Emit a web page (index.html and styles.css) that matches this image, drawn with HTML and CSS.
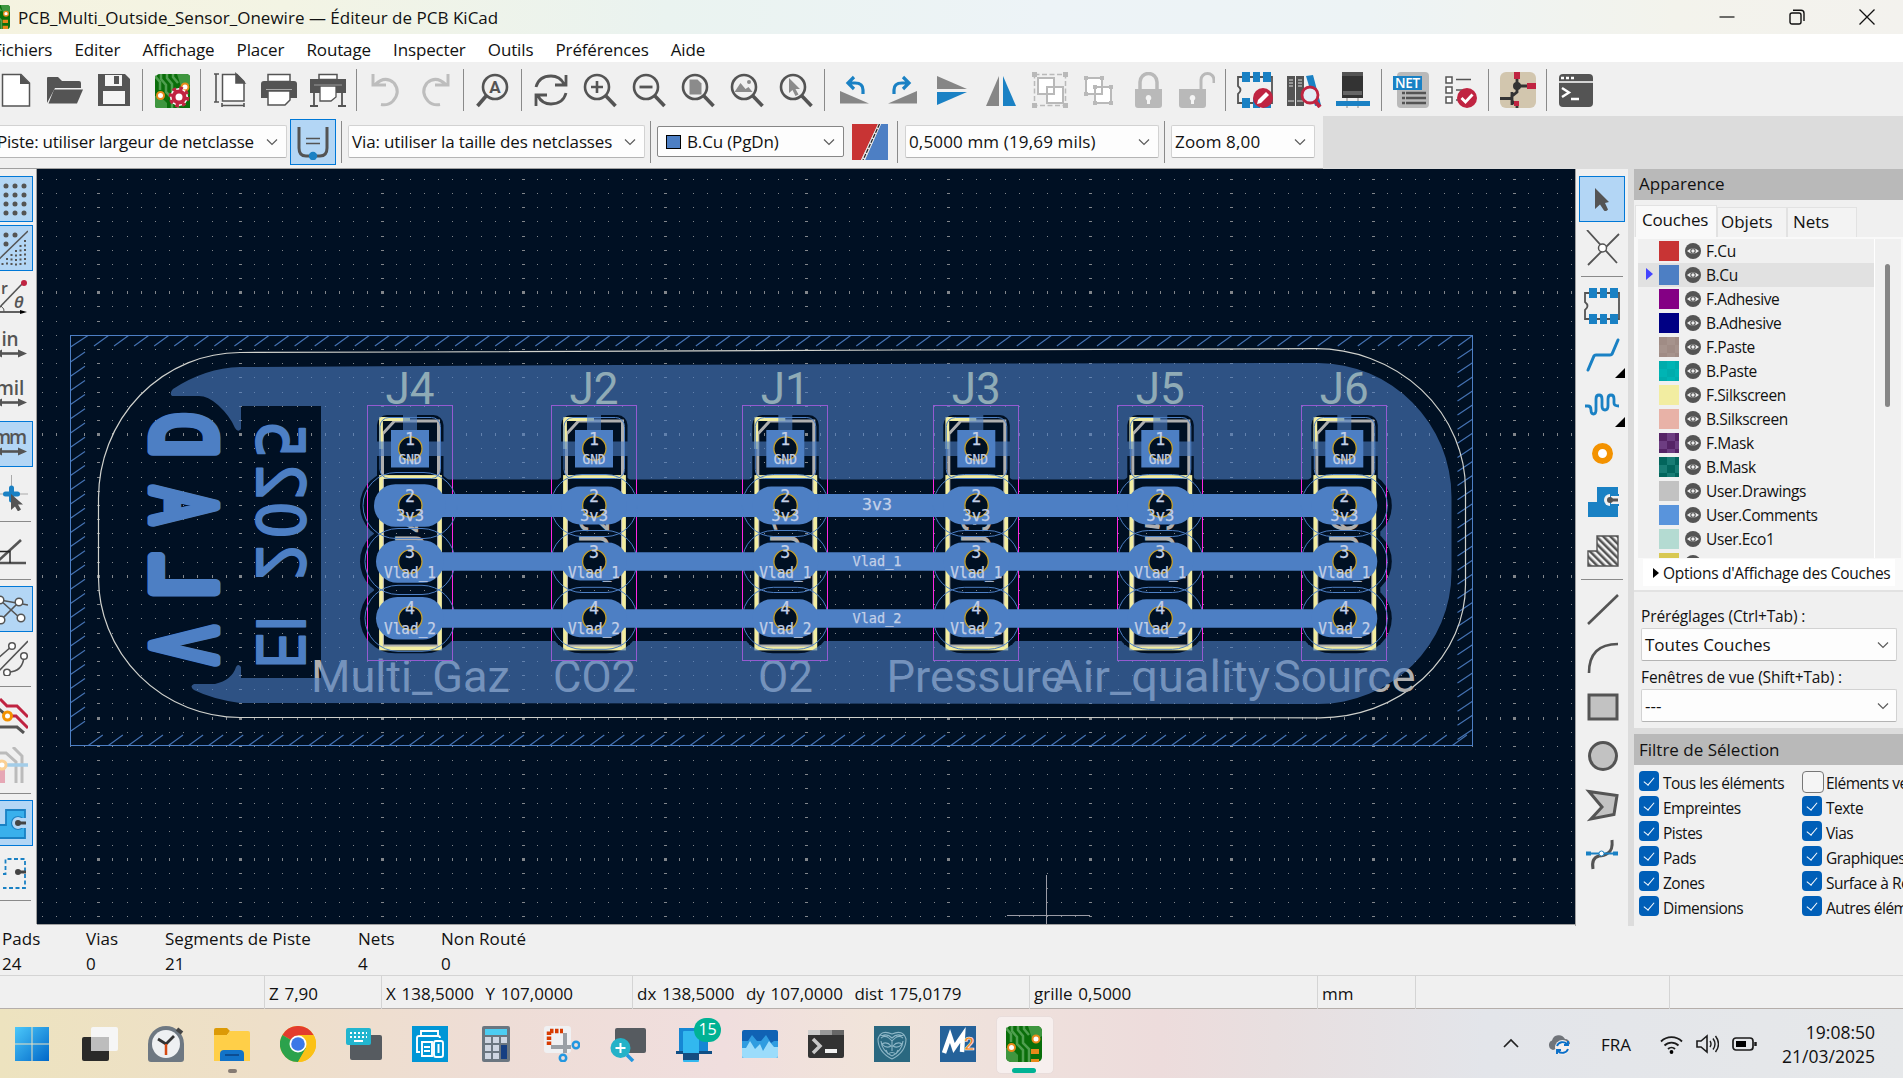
FILE: index.html
```html
<!DOCTYPE html>
<html lang="fr">
<head>
<meta charset="utf-8">
<title>PCB_Multi_Outside_Sensor_Onewire — Éditeur de PCB KiCad</title>
<link rel="stylesheet" href="styles.css">
</head>
<body>
<svg class="defs" width="0" height="0">
  <defs>
    <symbol id="eye" viewBox="0 0 16 16"><circle cx="8" cy="8" r="8" fill="#545454"/><path d="M2 8Q8 2.500 14 8Q8 13.500 2 8z" fill="#f0f0f0"/><circle cx="8" cy="8" r="2.200" fill="none" stroke="#545454" stroke-width="1.100"/></symbol>
    <symbol id="chev" viewBox="0 0 12 8"><path d="M1 1.500l5 5 5-5" fill="none" stroke="#5c5c5c" stroke-width="1.200"/></symbol>
    <symbol id="lens" viewBox="0 0 36 36"><circle cx="15" cy="15" r="12" fill="none" stroke="#545454" stroke-width="2.600"/><path d="M23.500 23.500L33.500 34" stroke="#545454" stroke-width="3.600"/></symbol>
    <symbol id="board" viewBox="0 0 36 36"><rect width="36" height="36" rx="5" fill="#0a6e0a"/><path d="M6 0v5l5 6v7l6 6v12M12 0v4l5 6v7l6 6v13M18 0v3l5 6" fill="none" stroke="#4f9e4f" stroke-width="2.500"/><path d="M22 0h9a5 5 0 0 1 5 5v5l-9 6zM0 22h5l7 7v7H5a5 5 0 0 1-5-5z" fill="#3f963f"/><path d="M0 2l5 6v8" fill="none" stroke="#4f9e4f" stroke-width="2.500"/><circle cx="30" cy="13" r="3.500" fill="#fff" stroke="#e8891a" stroke-width="2"/><circle cx="5.500" cy="21.500" r="3.500" fill="#fff" stroke="#e8891a" stroke-width="2"/></symbol>
    <symbol id="fp" viewBox="0 0 36 36"><path d="M1 5H35V31H1V22q5-4 0-8z" fill="none" stroke="#545454" stroke-width="1.800"/><path d="M5 0h8v10H5zM16 0h7v10h-7zM26 0h8v10h-8zM5 26h8v10H5zM16 26h7v10h-7zM26 26h8v10h-8z" fill="#1a81c4"/></symbol>
  </defs>
</svg>

<header class="titlebar">
  <svg class="appicon" viewBox="0 0 36 36"><use href="#board"/><path d="M25 22h8v5h-8zM25 31h8v5h-8z" fill="#e8891a"/></svg>
  <span class="title">PCB_Multi_Outside_Sensor_Onewire — Éditeur de PCB KiCad</span>
  <div class="wbtns">
    <svg viewBox="0 0 16 16"><path d="M.5 8h15" stroke="#111" stroke-width="1.200"/></svg>
    <svg viewBox="0 0 16 16"><rect x="1" y="4" width="11" height="11" rx="2" fill="none" stroke="#111" stroke-width="1.400"/><path d="M4 1.200h8a3 3 0 0 1 3 3V12" fill="none" stroke="#111" stroke-width="1.400"/></svg>
    <svg viewBox="0 0 16 16"><path d="M.5.500l15 15M15.500.500l-15 15" stroke="#111" stroke-width="1.300"/></svg>
  </div>
</header>

<nav class="menu"><span>Fichiers</span><span>Editer</span><span>Affichage</span><span>Placer</span><span>Routage</span><span>Inspecter</span><span>Outils</span><span>Préférences</span><span>Aide</span></nav>

<div class="toolbar">
  <i class="tb"><svg viewBox="0 0 36 36"><path d="M4.500 2.500H23L31.500 11V34H4.500z" fill="#fff" stroke="#545454" stroke-width="1.500"/><path d="M22 2l10 10H22z" fill="#545454"/></svg></i>
  <i class="tb"><svg viewBox="0 0 36 36"><path d="M0 31V6q0-1 1-1h10l4 4h17q2 0 2 2v5H8z" fill="#545454"/><path d="M7 17.500H36L30 31.500H1.500z" fill="#545454"/></svg></i>
  <i class="tb"><svg viewBox="0 0 36 36"><path d="M2 2h27l5 5v27H2z" fill="#545454"/><path d="M9 3h17v11H9zM7 19h22v13H7z" fill="#f4f4f4"/><path d="M18 4h5v8h-5z" fill="#545454"/></svg></i>
  <b class="sep"></b>
  <i class="tb"><svg viewBox="0 0 36 36"><svg x="1" y="2" width="34" height="33"><use href="#board"/></svg><circle cx="25" cy="25" r="9" fill="#fff"/><circle cx="25" cy="25" r="5.500" fill="#fff" stroke="#c02441" stroke-width="4"/><circle cx="25" cy="25" r="8.700" fill="none" stroke="#c02441" stroke-width="3.400" stroke-dasharray="3.600 3.230"/></svg></i>
  <b class="sep"></b>
  <i class="tb"><svg viewBox="0 0 36 36"><path d="M10.500 2.500H25L32 9.500V29H10.500z" fill="#fff" stroke="#545454" stroke-width="1.500"/><path d="M24 2l8.500 9H24zM4 2v28M2 2h5M2 30h5M10 33.500h22M10 31v4M32 31v4" fill="#545454" stroke="#545454" stroke-width="1.600"/></svg></i>
  <i class="tb"><svg viewBox="0 0 36 36"><path d="M7 2.500h22v7H7z" fill="#fff" stroke="#545454" stroke-width="1.500"/><path d="M3 9h30q3 0 3 3v14H0V12q0-3 3-3z" fill="#545454"/><path d="M7 19h22v9l-5 5H7z" fill="#fff" stroke="#545454" stroke-width="1.500"/><path d="M5 17.500h26" stroke="#aaa"/></svg></i>
  <i class="tb"><svg viewBox="0 0 36 36"><path d="M9 2.500h18v5H9z" fill="#fff" stroke="#545454" stroke-width="1.500"/><path d="M0 7h36v14H0z" fill="#545454"/><path d="M10 14h16v11l-5 4H10z" fill="#fff" stroke="#545454" stroke-width="1.300"/><path d="M4 20v14M32 20v14M0 34h8M28 34h8" stroke="#545454" stroke-width="1.800"/><path d="M4 13h28" stroke="#999"/></svg></i>
  <b class="sep"></b>
  <i class="tb"><svg viewBox="0 0 36 36"><path d="M5 2v11h13M7 12.500Q17 3 26 11q7 9-1 18-5 5-12 3.500" fill="none" stroke="#bdbdbd" stroke-width="3"/></svg></i>
  <i class="tb"><svg viewBox="0 0 36 36"><path d="M31 2v11H18M29 12.500Q19 3 10 11q-7 9 1 18 5 5 12 3.500" fill="none" stroke="#bdbdbd" stroke-width="3"/></svg></i>
  <b class="sep"></b>
  <i class="tb"><svg viewBox="0 0 36 36"><circle cx="20" cy="15" r="12" fill="none" stroke="#545454" stroke-width="2.600"/><path d="M11.500 23.500L2.500 34" stroke="#545454" stroke-width="3.600"/><text x="20" y="21" text-anchor="middle" font-size="17" font-weight="700" font-family="Roboto" fill="#545454">A</text></svg></i>
  <b class="sep"></b>
  <i class="tb"><svg viewBox="0 0 36 36"><path d="M3 15Q6 4 18 4q9 0 13 8M33 3v10H22M33 21q-3 11-15 11-9 0-13-8M3 34V23h11" fill="none" stroke="#545454" stroke-width="2.800"/></svg></i>
  <i class="tb"><svg viewBox="0 0 36 36"><use href="#lens"/><path d="M15 9v12M9 15h12" stroke="#545454" stroke-width="2.600"/></svg></i>
  <i class="tb"><svg viewBox="0 0 36 36"><use href="#lens"/><path d="M8.500 15h13" stroke="#545454" stroke-width="2.800"/></svg></i>
  <i class="tb"><svg viewBox="0 0 36 36"><use href="#lens"/><path d="M9.500 7.500h8l4 4v11h-12z" fill="#8b8b8b"/></svg></i>
  <i class="tb"><svg viewBox="0 0 36 36"><use href="#lens"/><path d="M5.500 20l6-9 5 6 3-2 4 5z" fill="#8b8b8b"/><circle cx="20" cy="10" r="2" fill="#8b8b8b"/></svg></i>
  <i class="tb"><svg viewBox="0 0 36 36"><use href="#lens"/><path d="M11 6v15l3.500-3 3 6 3-1.500-3-5.500h4.500z" fill="#8b8b8b"/></svg></i>
  <b class="sep"></b>
  <i class="tb"><svg viewBox="0 0 36 36"><path d="M4 19v12.500H33z" fill="#868686"/><path d="M27 22V18q0-7-8-7h-5M18 5l-6 6 6 6" fill="none" stroke="#1a81c4" stroke-width="3.200"/></svg></i>
  <i class="tb"><svg viewBox="0 0 36 36"><path d="M32 19v12.500H3z" fill="#868686"/><path d="M9 22V18q0-7 8-7h5M18 5l6 6-6 6" fill="none" stroke="#1a81c4" stroke-width="3.200"/></svg></i>
  <i class="tb"><svg viewBox="0 0 36 36"><path d="M3 4v13h30z" fill="#868686"/><path d="M3 33V20h30z" fill="#1a81c4"/></svg></i>
  <i class="tb"><svg viewBox="0 0 36 36"><path d="M16 4v30H3z" fill="#868686"/><path d="M20 4v30h13z" fill="#1a81c4"/></svg></i>
  <i class="tb"><svg viewBox="0 0 36 36"><path d="M2.500 2.500h31v31h-31z" fill="none" stroke="#b9b9b9" stroke-width="1.500" stroke-dasharray="5 2.500"/><path d="M0 0h5v5H0zM31 0h5v5h-5zM0 31h5v5H0zM31 31h5v5h-5z" fill="#b9b9b9"/><path d="M6 6h16v16H6zM15 15h16v16H15z" fill="#fff" stroke="#b9b9b9" stroke-width="2"/></svg></i>
  <i class="tb"><svg viewBox="0 0 36 36"><path d="M5 6h16v16H5zM14 15h16v16H14z" fill="#fff" stroke="#b9b9b9" stroke-width="2"/><path d="M3 4h4v4H3zM19 4h4v4h-4zM3 20h4v4H3zM12 13h4v4h-4zM28 13h4v4h-4zM12 29h4v4h-4zM28 29h4v4h-4z" fill="#b9b9b9"/></svg></i>
  <i class="tb"><svg viewBox="0 0 36 36"><path d="M5 17h27v16q0 3-3 3H8q-3 0-3-3z" fill="#b9b9b9"/><path d="M10 18V10a8.500 8.500 0 0 1 17 0v8" fill="none" stroke="#b9b9b9" stroke-width="3.500"/><path d="M18.500 23a3 3 0 0 1 1.500 5.500V32h-3v-3.500A3 3 0 0 1 18.500 23z" fill="#f4f4f4"/></svg></i>
  <i class="tb"><svg viewBox="0 0 36 36"><path d="M0 17h27v16q0 3-3 3H3q-3 0-3-3z" fill="#b9b9b9"/><path d="M22 18V8a6.500 6.500 0 0 1 13 0v3" fill="none" stroke="#b9b9b9" stroke-width="3"/><path d="M13.500 23a3 3 0 0 1 1.500 5.500V32h-3v-3.500A3 3 0 0 1 13.500 23z" fill="#f4f4f4"/></svg></i>
  <b class="sep"></b>
  <i class="tb"><svg viewBox="0 0 36 36"><use href="#fp"/><circle cx="26" cy="26" r="10" fill="#c02441"/><path d="M20 32l1-4 8-8 3 3-8 8z" fill="#fff"/></svg></i>
  <i class="tb"><svg viewBox="0 0 36 36"><path d="M1 4h8v30H1zM10 4h8v30h-8z" fill="#545454"/><path d="M20 4l7-1 8 30-6 1z" fill="#1a81c4"/><path d="M3 8h4M3 11h4M3 14h4M12 8h4M12 11h4M12 14h4M2 29h6M11 29h6" stroke="#ddd"/><circle cx="24" cy="23" r="8" fill="#e3edf6" stroke="#c02441" stroke-width="2.800"/><path d="M29 29l5 6" stroke="#c02441" stroke-width="4"/></svg></i>
  <i class="tb"><svg viewBox="0 0 36 36"><path d="M7 0h21v26H7z" fill="#333"/><path d="M7 0h21v4H7z" fill="#545454"/><path d="M8 19h19v4H8z" fill="#666"/><path d="M1 29h34v5H1z" fill="#1a81c4"/><path d="M12 26v3M23 26v3M12 34v2M23 34v2" stroke="#aaa" stroke-width="1.500"/></svg></i>
  <b class="sep"></b>
  <i class="tb"><svg viewBox="0 0 36 36"><rect x="4" width="32" height="36" rx="4" fill="#b9b9b9"/><path d="M0 4h29v14H0z" fill="#1a81c4"/><text x="14.500" y="16" text-anchor="middle" font-size="13.500" font-weight="600" font-family="Open Sans" textLength="25" fill="#fff">NET</text><path d="M13 21h20M13 26h20M13 31h20" stroke="#545454" stroke-width="2.600"/><path d="M9 21h3M9 26h3M9 31h3" stroke="#545454" stroke-width="2.600"/></svg></i>
  <i class="tb"><svg viewBox="0 0 36 36"><path d="M4 5h6v6H4zM4 15h6v6H4zM4 25h6v6H4z" fill="#fff" stroke="#545454" stroke-width="1.500"/><path d="M14 7.500h15M14 18h8M14 28h4" stroke="#545454" stroke-width="1.600"/><circle cx="25" cy="26" r="10" fill="#c02441"/><path d="M19.500 26l4 4 7-7.500" fill="none" stroke="#fff" stroke-width="2.800"/></svg></i>
  <b class="sep"></b>
  <i class="tb"><svg viewBox="0 0 36 36"><rect width="36" height="36" rx="6" fill="#d2c6ae"/><path d="M17 0v20l-6 5M17 14h14M0 26.500h12M12 20v13M12 29l5 4v3" fill="none" stroke="#333" stroke-width="2.800"/><circle cx="17" cy="14" r="4" fill="#333"/><path d="M14 0h6v7h-6zM27 11h9v6h-9zM14 29h5v5h-5z" fill="#c02441"/></svg></i>
  <b class="sep"></b>
  <i class="tb"><svg viewBox="0 0 36 36"><rect x="1" y="2" width="34" height="33" rx="4" fill="#545454"/><path d="M1 10h34" stroke="#fff" stroke-width="1.400"/><path d="M3 6h3M8 6h3M13 6h3" stroke="#fff" stroke-width="2.400"/><path d="M4 16l7 4.500L4 25M13 27h8" fill="none" stroke="#fff" stroke-width="2.400"/></svg></i>
</div>

<div class="options">
  <div class="combo c1"><span>Piste: utiliser largeur de netclasse</span><svg><use href="#chev"/></svg></div>
  <div class="toggle"><svg viewBox="0 0 36 36"><path d="M4 3v21q0 8 7 8h14q7 0 7-8V3" fill="none" stroke="#545454" stroke-width="3"/><path d="M11 14.500h14M11 19.500h14" stroke="#545454" stroke-width="1.500"/><circle cx="18" cy="32" r="4.200" fill="#1a81c4"/></svg></div>
  <b class="sep"></b>
  <div class="combo c2"><span>Via: utiliser la taille des netclasses</span><svg><use href="#chev"/></svg></div>
  <b class="sep"></b>
  <div class="combo c3"><i></i><span>B.Cu (PgDn)</span><svg><use href="#chev"/></svg></div>
  <svg class="pair" viewBox="0 0 36 36"><path d="M0 0h26L9 36H0z" fill="#c83434"/><path d="M29 0h7v36H13z" fill="#4d7fc4"/><path d="M26 0h3L13 36H9z" fill="#e4e4e4"/><path d="M27.500 0L11 36" stroke="#222" stroke-width="1.200" stroke-dasharray="4 1.500"/></svg>
  <b class="sep"></b>
  <div class="combo c4"><span>0,5000 mm (19,69 mils)</span><svg><use href="#chev"/></svg></div>
  <b class="sep"></b>
  <div class="combo c5"><span>Zoom 8,00</span><svg><use href="#chev"/></svg></div>
</div>

<main class="work">
  <aside class="left">
    <i class="vb on"><svg viewBox="0 0 36 36"><path d="M5 5h0M14 5h0M23 5h0M32 5h0M5 14h0M14 14h0M23 14h0M32 14h0M5 23h0M14 23h0M23 23h0M32 23h0M5 32h0M14 32h0M23 32h0M32 32h0" stroke="#545454" stroke-width="5" stroke-linecap="round"/></svg></i>
    <i class="vb on"><svg viewBox="0 0 36 36"><path d="M5 5h0M14 5h0M23 5h0M5 14h0M14 14h0" stroke="#545454" stroke-width="5" stroke-linecap="round"/><path d="M1 35L36 1" stroke="#545454" stroke-width="1.500"/><path d="M33 10v26M28.500 15v21M24 20v16M19.500 24v12M15 28v8M10.500 33v3" stroke="#545454" stroke-width="2" stroke-dasharray="2 2.500"/></svg></i>
    <i class="vb"><svg viewBox="0 0 36 36"><path d="M4 32L31 4" stroke="#545454" stroke-width="1.600"/><circle cx="32" cy="4" r="3" fill="#c02441"/><path d="M0 33h30" stroke="#222" stroke-width="1.400"/><path d="M28 31l7 2-7 2z"/><path d="M9 27q4 3 3 6" fill="none" stroke="#545454"/><text x="9" y="15" font-size="16" font-family="Open Sans" font-weight="600" fill="#545454">r</text><text x="22" y="29" font-size="17" font-family="Open Sans" font-style="italic" font-weight="600" fill="#545454">θ</text></svg></i>
    <i class="vb"><svg viewBox="0 0 36 36"><text x="18" y="18" text-anchor="middle" font-size="19" font-family="Open Sans" font-weight="600" fill="#545454">in</text><path d="M5 25.500h26" stroke="#545454" stroke-width="2.600"/><path d="M1 25.500l9-4v8zM35 25.500l-9-4v8z" fill="#545454"/></svg></i>
    <i class="vb"><svg viewBox="0 0 36 36"><text x="18" y="18" text-anchor="middle" font-size="19" font-family="Open Sans" font-weight="600" fill="#545454">mil</text><path d="M5 25.500h26" stroke="#545454" stroke-width="2.600"/><path d="M1 25.500l9-4v8zM35 25.500l-9-4v8z" fill="#545454"/></svg></i>
    <i class="vb on"><svg viewBox="0 0 36 36"><text x="18" y="18" text-anchor="middle" font-size="19" font-family="Open Sans" font-weight="600" textLength="34" fill="#545454">mm</text><path d="M5 25.500h26" stroke="#545454" stroke-width="2.600"/><path d="M1 25.500l9-4v8zM35 25.500l-9-4v8z" fill="#545454"/></svg></i>
    <i class="vb"><svg viewBox="0 0 36 36"><path d="M19.500 0v34M2 19h34" stroke="#aaa"/><path d="M19.500 13v12M13.500 19h12" stroke="#1a81c4" stroke-width="5" stroke-linecap="round"/><path d="M19 19v16l4-3.500 3 5 3-2-3-5h5z" fill="#545454"/></svg></i>
    <b class="hsep"></b>
    <i class="vb"><svg viewBox="0 0 36 36"><path d="M0 30h34" stroke="#545454" stroke-width="2.600"/><path d="M4 30L29 7" stroke="#545454" stroke-width="2.600"/><path d="M8 18.500h10V30" fill="none" stroke="#222" stroke-width="1.400"/></svg></i>
    <b class="hsep"></b>
    <i class="vb on"><svg viewBox="0 0 36 36"><path d="M8 9l20 18M8 30L27 11M8 9l28 5" stroke="#545454" stroke-width="1.600"/><g fill="#fff" stroke="#545454" stroke-width="1.500"><circle cx="8" cy="9" r="3.800"/><circle cx="27" cy="11" r="3.800"/><circle cx="29" cy="27" r="3.800"/><circle cx="9" cy="29" r="3.800"/></g></svg></i>
    <i class="vb"><svg viewBox="0 0 36 36"><path d="M2 36L36 1M4 20L20 6M16 32q15 0 16-16" fill="none" stroke="#545454" stroke-width="1.600"/><g fill="#fff" stroke="#545454" stroke-width="1.500"><circle cx="20" cy="6" r="3.300"/><circle cx="32" cy="16" r="3.300"/><circle cx="15" cy="32.500" r="3.300"/></g></svg></i>
    <b class="hsep"></b>
    <i class="vb"><svg viewBox="0 0 36 36"><path d="M8 1l7 7h10l11 11M18 18h6l12 12" fill="none" stroke="#c02441" stroke-width="3"/><path d="M7 11l8 7M8 29h17l7 6" fill="none" stroke="#545454" stroke-width="3"/><circle cx="15.500" cy="18" r="4" fill="#fff" stroke="#f39200" stroke-width="3"/></svg></i>
    <i class="vb"><svg viewBox="0 0 36 36"><path d="M7 6h7l10 9v21M21 0l9 9v27" fill="none" stroke="#bbb" stroke-width="3"/><path d="M10 18h26" stroke="#a3cde8" stroke-width="3.500"/><path d="M8 22h5v14H8z" fill="#e6a7b5"/><circle cx="10" cy="18" r="4" fill="#fff" stroke="#fbd094" stroke-width="3"/></svg></i>
    <b class="hsep"></b>
    <i class="vb on"><svg viewBox="0 0 36 36"><path d="M4 20h10V5h19v28H4z" fill="#39b0ec" stroke="#1a81c4" stroke-width="1.800"/><circle cx="26" cy="18" r="6.500" fill="#b3d6f5" stroke="#1a81c4" stroke-width="1.200"/><path d="M27 13h8v10h-8z" fill="#b3d6f5"/><circle cx="26" cy="18" r="3" fill="#444"/><path d="M26 18h8" stroke="#444" stroke-width="3"/></svg></i>
    <i class="vb"><svg viewBox="0 0 36 36"><path d="M11 20h2.500V5H33v29H11" fill="none" stroke="#1a81c4" stroke-width="1.800" stroke-dasharray="4 2.500"/><circle cx="26" cy="18" r="3" fill="#444"/><path d="M26 18h8" stroke="#444" stroke-width="3"/></svg></i>
    <b class="hsep"></b>
  </aside>

  <svg class="canvas" id="pcb" viewBox="37 169 1538 755" width="1538" height="755"></svg>

  <aside class="right">
    <i class="vb on"><svg viewBox="0 0 36 36"><path d="M11 7v21l5-4.500 4 6q2 1.500 4-1l-3-6.500 4-1z" fill="#545454"/></svg></i>
    <i class="vb"><svg viewBox="0 0 36 36"><path d="M3 0l30 33M35 4L4 35" stroke="#545454" stroke-width="1.800"/><circle cx="18.500" cy="18" r="4" fill="#fff" stroke="#545454" stroke-width="1.500"/></svg></i>
    <b class="hsep"></b>
    <i class="vb"><svg viewBox="0 0 36 36"><use href="#fp"/></svg></i>
    <i class="vb m"><svg viewBox="0 0 36 36"><path d="M4 33l6-14q.500-1 2-1h14q1.500 0 2-1l6-14" fill="none" stroke="#1a81c4" stroke-width="3" stroke-linecap="round"/></svg></i>
    <i class="vb m"><svg viewBox="0 0 36 36"><path d="M1 20h3q3 0 3 4t2.500 4 2.500-4V13q0-4 3-4t3 4v7q0 4 3 4t3-4v-7q0-4 3-4t3 4v4q0 3 5 3" fill="none" stroke="#1a81c4" stroke-width="2.800"/></svg></i>
    <i class="vb"><svg viewBox="0 0 36 36"><circle cx="18.500" cy="18.500" r="7.500" fill="#fff" stroke="#f39200" stroke-width="6"/></svg></i>
    <i class="vb"><svg viewBox="0 0 36 36"><path d="M4 18h9V3h21v30H4z" fill="#1a81c4"/><circle cx="26" cy="16" r="6" fill="#f0f0f0"/><path d="M26 10h9v12h-9z" fill="#1a81c4"/><path d="M27 12h8v8h-8z" fill="#f0f0f0"/><circle cx="26" cy="16" r="3" fill="#545454"/><path d="M26 16h8" stroke="#545454" stroke-width="3"/></svg></i>
    <i class="vb"><svg viewBox="0 0 36 36"><defs><pattern id="hx" width="5" height="5" patternUnits="userSpaceOnUse" patternTransform="rotate(-45)"><path d="M0 0v5" stroke="#545454" stroke-width="5"/></pattern></defs><path d="M4 18h9V3h21v30H4z" fill="url(#hx)" stroke="#545454" stroke-width="1.400"/></svg></i>
    <b class="hsep"></b>
    <i class="vb"><svg viewBox="0 0 36 36"><path d="M4 33L34 4" stroke="#545454" stroke-width="2.600"/></svg></i>
    <i class="vb"><svg viewBox="0 0 36 36"><path d="M5 33Q5 4 34 4" fill="none" stroke="#545454" stroke-width="2.600"/></svg></i>
    <i class="vb"><svg viewBox="0 0 36 36"><path d="M5 6h28v24H5z" fill="#c2c2c2" stroke="#545454" stroke-width="3"/></svg></i>
    <i class="vb"><svg viewBox="0 0 36 36"><circle cx="19" cy="18" r="13.500" fill="#c2c2c2" stroke="#545454" stroke-width="3"/></svg></i>
    <i class="vb"><svg viewBox="0 0 36 36"><path d="M5 4.500l28 4-3 19L7 32l11-12z" fill="#c2c2c2" stroke="#545454" stroke-width="3"/></svg></i>
    <i class="vb"><svg viewBox="0 0 36 36"><path d="M28 4q1 10-4 13-4 3-9 3-8 2-6 13" fill="none" stroke="#545454" stroke-width="3"/><path d="M4 17.500h30" stroke="#1a81c4" stroke-width="2"/><path d="M2 15.500h5v4H2zM29 15.500h5v4h-5z" fill="#1a81c4"/><circle cx="17.500" cy="17.500" r="2.500" fill="#fff" stroke="#1a81c4"/></svg></i>
  </aside>

  <section class="panel">
    <h2 class="phead">Apparence</h2>
    <div class="tabs"><span class="tab cur">Couches</span><span class="tab t2">Objets</span><span class="tab t3">Nets</span></div>
    <div class="book">
      <div class="listrow">
        <ul class="layers">
          <li><i class="s-fcu"></i><svg><use href="#eye"/></svg>F.Cu</li>
          <li class="sel"><i class="s-bcu"></i><svg><use href="#eye"/></svg>B.Cu</li>
          <li><i class="s-fad"></i><svg><use href="#eye"/></svg>F.Adhesive</li>
          <li><i class="s-bad"></i><svg><use href="#eye"/></svg>B.Adhesive</li>
          <li><i class="s-fpa"></i><svg><use href="#eye"/></svg>F.Paste</li>
          <li><i class="s-bpa"></i><svg><use href="#eye"/></svg>B.Paste</li>
          <li><i class="s-fsi"></i><svg><use href="#eye"/></svg>F.Silkscreen</li>
          <li><i class="s-bsi"></i><svg><use href="#eye"/></svg>B.Silkscreen</li>
          <li><i class="s-fma"></i><svg><use href="#eye"/></svg>F.Mask</li>
          <li><i class="s-bma"></i><svg><use href="#eye"/></svg>B.Mask</li>
          <li><i class="s-udr"></i><svg><use href="#eye"/></svg>User.Drawings</li>
          <li><i class="s-uco"></i><svg><use href="#eye"/></svg>User.Comments</li>
          <li><i class="s-ue1"></i><svg><use href="#eye"/></svg>User.Eco1</li>
          <li><i class="s-ue2"></i><svg><use href="#eye"/></svg></li>
        </ul>
        <div class="scroll"><b></b></div>
      </div>
      <div class="opts"><i></i><span>Options d'Affichage des Couches</span></div>
    </div>
    <label class="lbl">Préréglages (Ctrl+Tab) :</label>
    <div class="combo pc"><span>Toutes Couches</span><svg><use href="#chev"/></svg></div>
    <label class="lbl l2">Fenêtres de vue (Shift+Tab) :</label>
    <div class="combo pc"><span>---</span><svg><use href="#chev"/></svg></div>
    <h2 class="phead second">Filtre de Sélection</h2>
    <div class="checks">
      <span class="ck">Tous les éléments</span><span class="ck off">Eléments verrouillés</span>
      <span class="ck">Empreintes</span><span class="ck">Texte</span>
      <span class="ck">Pistes</span><span class="ck">Vias</span>
      <span class="ck">Pads</span><span class="ck">Graphiques</span>
      <span class="ck">Zones</span><span class="ck">Surface à Règles</span>
      <span class="ck">Dimensions</span><span class="ck">Autres éléments</span>
    </div>
  </section>
</main>

<div class="msg">
  <div>Pads<br>24</div><div>Vias<br>0</div><div>Segments de Piste<br>21</div><div>Nets<br>4</div><div>Non Routé<br>0</div>
</div>
<div class="status"><span></span><span>Z 7,90</span><span>X 138,5000&nbsp; Y 107,0000</span><span>dx 138,5000&nbsp; dy 107,0000&nbsp; dist 175,0179</span><span>grille 0,5000</span><span>mm</span><span></span><span></span></div>

<footer class="taskbar">
  <div class="apps">
    <i><svg viewBox="0 0 36 36"><defs><linearGradient id="wg" x2="1" y2="1"><stop offset="0" stop-color="#4cc8fa"/><stop offset="1" stop-color="#0067c8"/></linearGradient></defs><path d="M1 1h16.500v16.500H1zM18.500 1H35v16.500H18.500zM1 18.500h16.500V35H1zM18.500 18.500H35V35H18.500z" fill="url(#wg)"/></svg></i>
    <i><svg viewBox="0 0 36 36"><rect y="11" width="27" height="24" rx="2" fill="#2a2a29"/><rect x="9" y="1" width="27" height="24" rx="2" fill="#f6f6f6"/><path d="M9 11h18v14H9z" fill="#bdbdbd"/></svg></i>
    <i><svg viewBox="0 0 36 36"><path d="M0 18a18 18 0 0 1 36 0v15q0 3-3 3H3q-3 0-3-3z" fill="#6e7882"/><path d="M29 3l5 4" stroke="#444" stroke-width="4"/><circle cx="18" cy="18" r="14" fill="#eef0f2"/><path d="M18 18l8-8M18 18l-8-5" stroke="#333" stroke-width="2.800"/><path d="M18 18v11" stroke="#d64a13" stroke-width="2.500"/></svg></i>
    <i class="run"><svg viewBox="0 0 36 36"><path d="M0 4q0-2 2-2h11l3 3-3 4H0z" fill="#dc9a06"/><path d="M0 9h13l3-4h18q2 0 2 2v28H0z" fill="#ffcf48"/><path d="M6 35v-7q0-4 4-4h16q4 0 4 4v7z" fill="#1273c8"/><path d="M11 29h14" stroke="#0c4d92" stroke-width="2"/></svg></i>
    <i><svg viewBox="0 0 36 36"><circle cx="18" cy="18" r="18" fill="#fbc116"/><path d="M18 18L2.400 9A18 18 0 0 1 33.600 9z" fill="#e33b2e"/><path d="M2.400 9a18 18 0 0 0 15.600 27l8-14-8-4z" fill="#2ba24c"/><path d="M18 9h15.600A18 18 0 0 1 18 36l8-14z" fill="#fbc116"/><circle cx="18" cy="18" r="8.500" fill="#fff"/><circle cx="18" cy="18" r="6.800" fill="#3b78e7"/></svg></i>
    <i><svg viewBox="0 0 36 36"><rect x="4" y="9" width="32" height="25" rx="2" fill="#565b60"/><rect y="2" width="25" height="17" rx="2" fill="#22b5cf"/><path d="M4 7h17M4 11h17" stroke="#fff" stroke-width="2" stroke-dasharray="2 2"/><path d="M8 15h9" stroke="#fff" stroke-width="2"/></svg></i>
    <i><svg viewBox="0 0 36 36"><path d="M0 0h36v36H0z" fill="#0096d6"/><path d="M9 9V5h17v4M8 26H5V12q0-2 2-2h19q2 0 2 2M10 16h10v14H10zM12 21h6M12 25h6" fill="none" stroke="#fff" stroke-width="1.900"/><rect x="22" y="15" width="9" height="16" rx="2" fill="#0096d6" stroke="#fff" stroke-width="1.900"/><path d="M26.500 18v9" stroke="#fff" stroke-width="2"/></svg></i>
    <i><svg viewBox="0 0 36 36"><rect x="4" width="28" height="36" rx="2" fill="#6b7680"/><path d="M7 3h22v6H7z" fill="#4ccdf2"/><path d="M7 11h6v6H7zM15 11h6v6h-6zM23 11h6v6h-6zM7 19h6v6H7zM15 19h6v6h-6zM7 27h6v6H7zM15 27h6v6h-6z" fill="#cfd6e2"/><path d="M23 19h6v14h-6z" fill="#163f82"/></svg></i>
    <i><svg viewBox="0 0 36 36"><rect width="27" height="27" rx="3" fill="#f0f1f3"/><path d="M5 19V5h14" fill="none" stroke="#d83b01" stroke-width="4.500" stroke-dasharray="3.500 1.500"/><path d="M21 7v20M7 21h20" stroke="#9aa0a6" stroke-width="4"/><circle cx="32" cy="19" r="3.200" fill="none" stroke="#2397e0" stroke-width="2.500"/><circle cx="19" cy="32" r="3.200" fill="none" stroke="#2397e0" stroke-width="2.500"/></svg></i>
    <i><svg viewBox="0 0 36 36"><rect x="5" y="2" width="31" height="25" rx="2" fill="#565b60"/><circle cx="10.500" cy="22" r="10" fill="#24b2c8"/><path d="M10.500 17v10M5.500 22h10" stroke="#fff" stroke-width="2"/><path d="M17 29l6 6" stroke="#2397e0" stroke-width="3.500"/></svg></i>
    <i><svg viewBox="0 0 36 36"><path d="M3 2h29v24H3z" fill="#1687d4"/><path d="M0 25h36v3H0z" fill="#104f85"/><rect x="7" y="5" width="16" height="31" rx="1" fill="#32b8ef"/><path d="M7 27h16v7H7z" fill="#154d80"/></svg><em>15</em></i>
    <i><svg viewBox="0 0 36 36"><rect y="4" width="36" height="28" rx="2" fill="#1062b4"/><path d="M0 15h6l4-6 5 6 4 0 5-6 5 8 3-2h4v15q0 2-2 2H2q-2 0-2-2z" fill="#2f9ce0"/><path d="M0 22h4l4-7 5 8 5-5 3 7 6-10 5 6h4v9q0 2-2 2H2q-2 0-2-2z" fill="#9bdcfb"/></svg></i>
    <i><svg viewBox="0 0 36 36"><rect y="4" width="36" height="28" rx="2" fill="#333"/><path d="M0 4h12v5H0z" fill="#ccc"/><path d="M12 4h12v5H12z" fill="#999"/><path d="M24 4h12v5H24z" fill="#666"/><path d="M5 13l7 7-7 7" fill="none" stroke="#c8c8c8" stroke-width="3.500"/><path d="M17 25h12" stroke="#f2f2f2" stroke-width="4"/></svg></i>
    <i><svg viewBox="0 0 36 36"><path d="M0 0h36v36H0z" fill="#2a6880"/><path d="M18 33Q4 26 4 13q3-10 14-5 11-5 14 5 0 13-14 20zM18 30Q8 25 7 15M18 30q10-5 11-15M7 12q5-4 11 3 6-7 11-3M8 10q5-3 10 2 5-5 10-2M8 18q5-3 9 2-5 3-9-2zM28 18q-5-3-9 2 5 3 9-2zM14 28q4-3 8 0M18 15v10M6 9l8 2M30 9l-8 2M12 24l2 4M24 24l-2 4" fill="none" stroke="#8db6c6" stroke-width="1.100"/></svg></i>
    <i><svg viewBox="0 0 36 36"><path d="M0 0h36v36H0z" fill="#25629a"/><path d="M4 27L10 10l4 12 9-13-1 17" fill="none" stroke="#fff" stroke-width="4.500"/><text x="24" y="24" font-size="18" font-weight="700" font-family="Roboto" fill="#f58220" stroke="#fff" stroke-width=".6">2</text></svg></i>
    <i class="active"><svg viewBox="0 0 36 36"><use href="#board"/><path d="M25 23h8v5h-8zM25 33h8v3h-8z" fill="#e8891a"/></svg></i>
  </div>
  <div class="tray">
    <svg class="t-ch" viewBox="0 0 18 18"><path d="M2 12l7-7 7 7" fill="none" stroke="#222" stroke-width="1.700"/></svg>
    <svg class="t-cl" viewBox="0 0 24 24"><path d="M6 18a5 5 0 0 1-1-9.500A7 7 0 0 1 18 7a5 5 0 0 1 5 5" fill="#70747a"/><circle cx="15.500" cy="15.500" r="7.500" fill="#f3eeee"/><path d="M10 14a6 6 0 0 1 10-2M21 9v4h-4M21 17a6 6 0 0 1-10 2M10 22v-4h4" fill="none" stroke="#0a6fc8" stroke-width="1.900"/></svg>
    <span class="fra">FRA</span>
    <svg class="t-wi" viewBox="0 0 24 24"><path d="M1.500 9.500a15 15 0 0 1 21 0M5 13.500a10 10 0 0 1 14 0M8.500 17a5 5 0 0 1 7 0" fill="none" stroke="#1c1c1c" stroke-width="1.800"/><circle cx="12" cy="20" r="1.900"/></svg>
    <svg class="t-vo" viewBox="0 0 24 24"><path d="M2 9h4l6-5v16l-6-5H2z" fill="none" stroke="#1c1c1c" stroke-width="1.600"/><path d="M15 9q2 3 0 6M18 6.500q4 5.500 0 11M20.500 4q6 8 0 16" fill="none" stroke="#1c1c1c" stroke-width="1.400"/></svg>
    <svg class="t-ba" viewBox="0 0 26 24"><rect x="1" y="6" width="20" height="12" rx="3" fill="none" stroke="#1c1c1c" stroke-width="1.700"/><path d="M4 9h10v6H4z"/><path d="M23.500 10v4" stroke="#1c1c1c" stroke-width="2.500"/></svg>
    <div class="clock">19:08:50<br>21/03/2025</div>
  </div>
</footer>
<script src="board.js"></script>
</body>
</html>
```

FILE: styles.css
```css
* { box-sizing: border-box; }
html, body { margin: 0; height: 100%; }
body { width: 1903px; height: 1078px; overflow: hidden; display: flex; flex-direction: column; font-family: "Open Sans", "Noto Sans", sans-serif; font-size: 17px; letter-spacing: -0.15px; color: #111; background: #f0f0f0; }
i { font-style: normal; }
svg { display: block; flex: none; }
.defs { position: absolute; }

.titlebar { height: 34px; flex: none; display: flex; align-items: center; background: linear-gradient(90deg, #f5f3e0 0, #f3f4e4 15%, #eaf3f0 35%, #edf3f7 55%, #edf3f5 72%, #f3f3ec 88%, #f3f2ee 100%); }
.appicon { width: 24px; height: 24px; margin-left: -14px; }
.title { margin-left: 8px; white-space: nowrap; letter-spacing: 0.020px; }
.wbtns { margin-left: auto; margin-right: 28px; display: flex; gap: 54px; }
.wbtns svg { width: 16px; height: 16px; }

.menu { height: 28px; flex: none; background: #fff; display: flex; align-items: center; gap: 22.200px; padding-top: 2px; }
.menu span { white-space: nowrap; }
.menu span:first-child { margin-left: -7px; }

.toolbar { height: 54px; flex: none; display: flex; align-items: center; margin-left: -9px; padding-top: 2px; }
.tb { width: 49px; height: 49px; flex: none; display: grid; place-items: center; }
.tb svg { width: 36px; height: 36px; }
.sep { width: 9px; height: 42px; flex: none; background: linear-gradient(#8a8a8a, #8a8a8a) 4px 0 / 1px 100% no-repeat; }

.options { height: 53px; flex: none; width: 1323px; display: flex; align-items: center; padding-bottom: 1px; box-shadow: 580px 0 0 #dcdcdc; border-bottom: 1px solid #a0a0a0; }
.combo { height: 33px; flex: none; background: #fdfdfd; border: 1px solid #d2d2d2; border-bottom-color: #b4b4b4; border-radius: 2px; display: flex; align-items: center; padding: 0 8px 0 3px; white-space: nowrap; }
.combo svg { width: 12px; height: 8px; margin-left: auto; }
.c1 { width: 297px; margin-left: -10px; padding-left: 6px; letter-spacing: -0.220px; }
.toggle { width: 46px; height: 46px; margin: 0 1px 0 3px; background: #b3d6f5; border: 1px solid #0078d7; display: grid; place-items: center; }
.toggle svg, .pair { width: 36px; height: 36px; }
.c2 { width: 297px; margin: 0 1px 0 2px; }
.c3 { width: 187px; height: 31px; margin: 0 8px 0 2px; border-color: #868686; }
.c3 i { width: 15px; height: 14px; background: #4d7fc4; border: 1px solid #000; margin: 0 6px 0 5px; }
.pair { margin-right: 5px; }
.c4 { width: 254px; margin: 0 1px 0 3px; letter-spacing: 0.150px; }
.c5 { width: 144px; margin-left: 2px; letter-spacing: 0.150px; }

.work { height: 757px; flex: none; display: flex; }
.left { width: 36px; margin-right: 1px; padding-top: 5px; overflow: hidden; flex: none; }
.left .vb, .left .hsep { margin-left: -13px; }
.right { width: 53px; flex: none; padding: 5px 0 0 3px; background: #f0f0f0; border-left: 1px solid #a0a0a0; }
.vb { width: 46px; height: 46px; margin: 1.500px 0; display: grid; place-items: center; position: relative; }
.vb + .vb { margin-top: 3px; }
.hsep + .vb { margin-top: 1.500px; }
.vb.on { background: #b3d6f5; border: 1px solid #0078d7; }
.vb { margin-bottom: 0; }
.vb svg { width: 36px; height: 36px; }
.vb.m::after { content: ""; position: absolute; right: 0; bottom: 0; border: 5px solid transparent; border-right-color: #000; border-bottom-color: #000; }
.hsep { display: block; width: 42px; height: 9px; margin-top: 1.500px; margin-left: 2px; background: linear-gradient(#8a8a8a, #8a8a8a) 0 4px / 100% 1px no-repeat; }
.left .hsep { width: 44px; }
.canvas { background: #001023; box-shadow: -1px 0 0 #a0a0a0, 0 1px 0 #a0a0a0; letter-spacing: 0; }

.panel { width: 275px; flex: none; border-left: 6px solid #dcdcdc; background: #f0f0f0; overflow: hidden; }
.phead { margin: 0; height: 31px; background: #b9b9b9; font-size: 17px; font-weight: 400; line-height: 30px; padding-left: 5px; letter-spacing: 0; }
.tabs { height: 37px; display: flex; align-items: flex-end; padding-left: 1px; }
.tab { height: 30px; border: 1px solid #e2e2e2; border-bottom: 0; width: 70px; padding-left: 3px; line-height: 28px; font-size: 17px; letter-spacing: 0; background: #f3f3f3; white-space: nowrap; }
.tab.cur { width: 82px; height: 32px; line-height: 28px; background: #f9f9f9; padding-left: 6px; letter-spacing: -0.200px; }
.tab.t3 { padding-left: 5px; letter-spacing: -0.100px; }
.book { height: 355px; background: #f9f9f9; border-bottom: 2px solid #e2e2e2; padding: 2px 0 0 4px; }
.listrow { height: 319px; display: flex; }
.layers { list-style: none; margin: 0; padding: 0; width: 236px; height: 319px; overflow: hidden; background: #f0f0f0; }
.layers li { height: 24px; display: flex; align-items: center; padding-left: 21px; font-size: 15.500px; letter-spacing: -0.400px; position: relative; }
.layers li i { width: 20px; height: 20px; margin-right: 6px; }
.layers li svg { width: 16px; height: 16px; margin-right: 5px; }
.layers .sel { background: #e1e1e1; }
.sel::before { content: ""; position: absolute; left: 8px; top: 5px; border: 6.500px solid transparent; border-left: 7px solid #4444ff; border-right: 0; }
.s-fcu { background: #c83434; } .s-bcu { background: #4d7fc4; } .s-fad { background: #840084; } .s-bad { background: #000084; }
.s-fpa { background: repeating-conic-gradient(#a6938c 0 25%, #a08c85 0 50%) 0 0 / 16px 16px; }
.s-bpa { background: repeating-conic-gradient(#00b4b4 0 25%, #00acac 0 50%) 0 0 / 16px 16px; }
.s-fsi { background: #f2eda1; } .s-bsi { background: #e8b2a7; }
.s-fma { background: repeating-conic-gradient(#6d3d81 0 25%, #562466 0 50%) 0 0 / 16px 16px; }
.s-bma { background: repeating-conic-gradient(#187c74 0 25%, #02655c 0 50%) 0 0 / 16px 16px; }
.s-udr { background: #c2c2c2; } .s-uco { background: #5994dc; } .s-ue1 { background: #b4dbd2; } .s-ue2 { background: #d8c852; }
.scroll { width: 27px; border-left: 1px solid #fff; background: #f0f0f0; padding: 25px 0 0 10px; }
.scroll b { display: block; width: 5px; height: 143px; border-radius: 3px; background: #868686; }
.opts { margin: 1px 0 0 5px; width: 252px; height: 27px; background: #fff; display: flex; align-items: center; padding-left: 10px; font-size: 15.500px; letter-spacing: -0.280px; white-space: nowrap; }
.opts i { border: 5.500px solid transparent; border-left: 6px solid #000; border-right: 0; margin-right: 4px; }
.lbl { display: block; height: 22px; line-height: 22px; margin: 13px 0 1px 7px; font-size: 15.500px; letter-spacing: -0.120px; white-space: nowrap; }
.lbl.l2 { margin-top: 5px; }
.pc { width: 256px; margin-left: 7px; letter-spacing: 0; }
.pc svg { position: relative; left: 1px; }
.second { margin-top: 6px; border-top: 6px solid #dcdcdc; height: 37px; line-height: 31px; }
.checks { display: grid; grid-template-columns: 163px 200px; grid-auto-rows: 25px; padding: 5px 0 0 5px; font-size: 15.500px; letter-spacing: -0.500px; }
.ck { position: relative; padding-left: 24px; line-height: 26px; white-space: nowrap; }
.ck::before { content: ""; position: absolute; left: 0; top: 1px; width: 20px; height: 20px; border-radius: 4px; background: #005fb8; }
.ck::after { content: ""; position: absolute; left: 7px; top: 5px; width: 5px; height: 9px; border: solid #fff; border-width: 0 1px 1px 0; transform: rotate(40deg); }
.ck.off::before { background: #f5f5f5; border: 1px solid #777; }
.ck.off::after { display: none; }

.msg { height: 50px; flex: none; border-bottom: 1px solid #d4d4d4; display: grid; grid-template-columns: 84px 79px 193px 83px 200px; padding: 1px 0 0 2px; line-height: 24.500px; letter-spacing: 0.050px; }
.status { height: 33px; flex: none; display: grid; grid-template-columns: 265px 117px 251px 397px 288px 98px 254px 1fr; border-bottom: 1px solid #b5aeaa; letter-spacing: 0; word-spacing: 1.300px; }
.status span { border-right: 1px solid #d4d4d4; padding-left: 4px; line-height: 35px; margin-bottom: 1px; white-space: nowrap; }
.status span:last-child { border: 0; }

.taskbar { height: 70px; flex: none; display: flex; background: linear-gradient(90deg, #ede3bf 0, #eedfc9 14%, #eeddd6 26%, #f0dede 38%, #f1e4da 46%, #efe1dc 52%, #eddcdc 61%, #e8dfe0 67%, #e3e5ea 78%, #e6e8ea 100%); }
.apps { display: flex; align-items: center; }
.apps i { width: 66px; height: 66px; display: grid; place-items: center; position: relative; }
.apps svg { width: 36px; height: 36px; }
.apps i:first-child { width: 67px; padding-right: 3px; }
.apps .run::after { content: ""; position: absolute; left: 29px; bottom: 4px; width: 9px; height: 4px; border-radius: 2px; background: #857b73; }
.apps .active::before { content: ""; position: absolute; left: 5px; top: 5px; width: 56px; height: 56px; border-radius: 5px; background: #f7efee; border: 1px solid #e9dddb; }
.apps .active svg { position: relative; }
.apps .active::after { content: ""; position: absolute; left: 21px; bottom: 4px; width: 24px; height: 5px; border-radius: 3px; background: #00b294; }
.apps em { position: absolute; right: 6px; top: 7px; width: 27px; height: 24px; border-radius: 12px; background: #00b294; color: #fff; font-style: normal; font-size: 16px; line-height: 23px; text-align: center; }
.tray { margin-left: auto; display: flex; align-items: center; padding-right: 28px; }
.t-ch { width: 18px; height: 18px; margin-right: 26px; }
.t-cl { width: 26px; height: 24px; margin-right: 29px; }
.fra { margin-right: 28px; font-size: 17px; letter-spacing: 0; }
.t-wi { width: 25px; height: 24px; margin-right: 11px; }
.t-vo { width: 24px; height: 24px; margin-right: 13px; }
.t-ba { width: 26px; height: 24px; margin-right: 24px; }
.clock { text-align: right; line-height: 24px; font-size: 17.500px; letter-spacing: 0; }
```

FILE: board.js
```js
// Draws the board view: grid, outlines, footprints, copper zone, tracks and labels.
const svg = document.getElementById('pcb');
const DARK = '#001023', CU = '#4d7fc4', SILK = '#f2eda1', FAB = '#afafaf';
const LABEL = 'font-family="Roboto, sans-serif" font-weight="400"';
const NET = 'font-family="DejaVu Sans Mono, monospace" fill="#c3d0e8" stroke="#c3d0e8" stroke-width=".25"';
const rr = (x, y, w, h, r, extra) => `<rect x="${x}" y="${y}" width="${w}" height="${h}" rx="${r}" ${extra}/>`;
const txt = (x, y, s, size, len, extra) => `<text x="${x}" y="${y}" text-anchor="middle" font-size="${size}" textLength="${len}" lengthAdjust="spacingAndGlyphs" ${extra}>${s}</text>`;
// One letter of the back-copper lettering, mirrored and turned upwards; y is where the letter starts.
const back = (s, y, w) => `<text transform="matrix(0 -1 -1 0 152.500 ${y})" font-family="Roboto" font-size="88" textLength="${w}" lengthAdjust="spacingAndGlyphs" stroke-width="11">${s}</text>`;

const parts = [
  { x: 410, ref: 'J4', val: 'Multi_Gaz', vx: 410.5, vw: 199, big: true },
  { x: 594, ref: 'J2', val: 'CO2', vx: 594.5, vw: 83 },
  { x: 785.3, ref: 'J1', val: 'O2', vx: 785.5, vw: 55 },
  { x: 976.3, ref: 'J3', val: 'Pressure', vx: 975.5, vw: 178 },
  { x: 1160.3, ref: 'J5', val: 'Air_quality', vx: 1161, vw: 218 },
  { x: 1344.3, ref: 'J6', val: 'Source', vx: 1344.5, vw: 142 }
];
const pinY = [448.5, 505.5, 561.5, 618.3];
const nets = ['GND', '3v3', 'Vlad_1', 'Vlad_2'];

function grid() {
  let d = '';
  for (let i = -4; i < 105; i++) {
    const x = Math.round(98.3 + i * 14.16);
    for (let j = -8; j < 46; j++) {
      const y = Math.round(292.3 + j * 14.175);
      const bx = i % 10 === 0, by = j % 10 === 0;
      const w = bx ? 3 : 1, h = by ? 3 : 1;
      d += `M${x - (w >> 1)} ${y - (h >> 1)}h${w}v${h}h-${w}z`;
    }
  }
  return `<path d="${d}" fill="#82868b" shape-rendering="crispEdges"/>`;
}

function areaHatch() {
  let d = 'M70.500 347L88 335.500';
  for (let x = 94; x < 1460; x += 20.06) d += `M${x} 346l14.500 -10.500`;
  for (let x = 88.3; x < 1460; x += 20.06) d += `M${x} 745.500l14.500 -10.500`;
  for (let y = 362; y < 745; y += 14.2) d += `M70.500 ${y}l14.500 -10`;
  for (let y = 358.7; y < 745; y += 14.1) d += `M1457.500 ${y}l15 -10`;
  return `<path d="${d}" stroke="#4472b2" stroke-width="1.200" fill="none"/><rect x="70.500" y="335.500" width="1402" height="410" stroke="${CU}" fill="none"/>`;
}

function underlay(p) {
  const x = p.x;
  return txt(x, 404, p.ref, 45, 49, `${LABEL} fill="${SILK}"`) +
    txt(p.vx, 691.5, p.val, 45, p.vw, `${LABEL} fill="${FAB}"`) +
    `<g transform="translate(${x + 15} 533) rotate(-90)">${txt(0, 0, p.ref, 43, 48, `${LABEL} fill="${FAB}"`)}</g>` +
    `<path d="M${x - 27.5} 646V434l12 -13H${x + 28.5}V646z" fill="none" stroke="${FAB}" stroke-width="3"/>` +
    `<path d="M${x - 29} 449V419H${x}" fill="none" stroke="${SILK}" stroke-width="3.800"/>` +
    `<rect x="${x - 29}" y="477" width="59" height="171.500" fill="none" stroke="${SILK}" stroke-width="3.800"/>` +
    `<rect x="${Math.round(x - 43) + .5}" y="405.500" width="85" height="255" fill="none" stroke="#ff26e2"/>`;
}

function cut(p) {
  const x = p.x, k = p.big ? 50 : 47.5;
  let s = rr(x - 33, 415, 66.5, 75, 10, 'fill="#000"');
  for (let n = 1; n < 4; n++) s += rr(x - k, pinY[n] - 35, 2 * k, 70, 35, 'fill="#000"');
  s += rr(x - 36, 480, 72, 165, 0, 'fill="#000"');
  return s + `<path d="M${x - 34} 441.500h68v14.500h-68zM${x - 7} 413h14v34h-14z" fill="#fff"/>`;
}

function copper(p) {
  const x = p.x, a = 'fill="none" stroke="' + CU + '"';
  let s = rr(x - 30, 417.5, 60.5, 61, 9, a);
  for (let n = 1; n < 4; n++) {
    const k = p.big ? (n === 1 ? 47 : 45) : 43, h = p.big ? 33 : 31;
    s += rr(x - k, pinY[n] - h, 2 * k, 2 * h, h, a);
    const w = p.big ? (n === 1 ? 36 : 34) : 33, g = p.big ? 21.3 : 19;
    s += rr(x - w, pinY[n] - g, 2 * w, 2 * g, g, `fill="${CU}"`);
  }
  return s + `<rect x="${x - 19}" y="430" width="38" height="37.500" fill="${CU}"/>`;
}

function pinLabels(p) {
  const x = p.x;
  let s = '';
  pinY.forEach((y, n) => {
    s += `<circle cx="${x + .3}" cy="${y}" r="11.700" fill="${DARK}" stroke="#c4a02e" stroke-width="1.300"/>`;
    s += txt(x, y - 4, n + 1, 17, 10, NET);
    const w = [23, 28, 52, 52][n];
    s += txt(x, y + [15, 15.5, 16, 16][n], nets[n], n === 0 ? 13.5 : 16, w, NET);
  });
  return s;
}

const zone = 'M240 367L620 365L1000 363.500L1318 363A134 134 0 0 1 1451.500 497V572A134 132 0 0 1 1318 704L240 703Q212 699 194 690Q189 686 194 684H215Q232 680 236 667Q238 663 241 667V678H321V406H241V429Q238 433 235 428Q230 416 218 405Q208 396 199 396H172Q169 393 173 389Q205 368 240 367z';
const outline = 'M240 352.500L420 352L900 350L1315 348.700A150 141 0 0 1 1465.500 490V585A146 133 0 0 1 1320 717.800L1050 717.500H240A142 140 0 0 1 98.500 577V498A142 146 0 0 1 240 352.500z';

svg.innerHTML =
  `<defs><mask id="zm" maskUnits="userSpaceOnUse" x="37" y="169" width="1538" height="755"><path d="${zone}" fill="#fff"/><rect x="410" y="479.500" width="934" height="161.500" fill="#000"/>${parts.map(cut).join('')}</mask></defs>` +
  grid() + areaHatch() +
  `<path d="${outline}" fill="none" stroke="#d0d2cd" stroke-width="1.200"/>` +
  parts.map(underlay).join('') +
  `<rect x="37" y="169" width="1538" height="755" fill="${CU}" fill-opacity=".6" mask="url(#zm)"/>` +
  `<g fill="${CU}" stroke="${CU}" stroke-linejoin="round">` +
  back('V', 664, 37) + back('L', 598, 43) + back('A', 524, 37) + back('D', 457, 44) +
  `<text transform="matrix(0 -.9 -1 0 257 665)" x="-5 36 70 94 140 183 230" font-family="DejaVu Sans" font-size="66" stroke-width="2">EI 2025</text></g>` +
  `<path d="M410 505.500H1344" stroke="${CU}" stroke-width="23"/><path d="M410 561.500H1344M410 618.500H1344" stroke="${CU}" stroke-width="18.500"/>` +
  parts.map(copper).join('') +
  parts.map(pinLabels).join('') +
  txt(877, 510, '3v3', 16, 30, NET) +
  txt(877, 566, 'Vlad_1', 14.5, 49, NET) +
  txt(877, 623, 'Vlad_2', 14.5, 49, NET) +
  `<path d="M1046.500 875V924M1007 915.500H1090" stroke="#9a9ba5"/>`;
```
